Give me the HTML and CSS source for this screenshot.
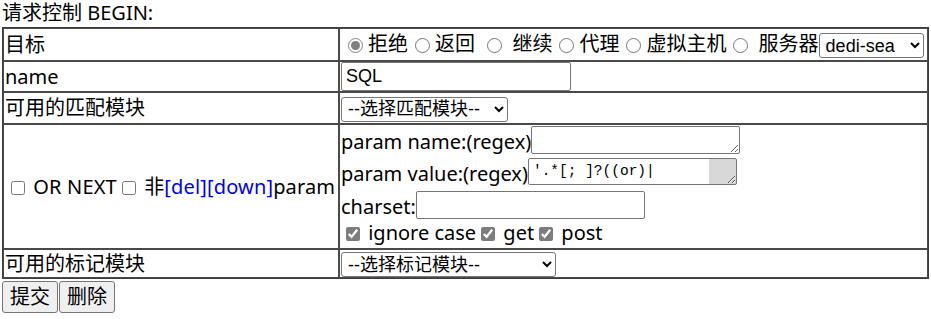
FILE: index.html
```html
<!DOCTYPE html>
<html lang="zh-CN">
<head>
<meta charset="utf-8">
<title>请求控制</title>
<link rel="stylesheet" href="styles.css">
</head>
<body>
<div class="title">请求控制 BEGIN:</div>
<form class="form">
<table class="grid">
  <tr class="row-target">
    <td class="label">目标</td>
    <td class="field"><input class="radio" type="radio" name="act" checked>拒绝<input class="radio" type="radio" name="act">返回 <input class="radio" type="radio" name="act"> 继续<input class="radio" type="radio" name="act">代理<input class="radio" type="radio" name="act">虚拟主机<input class="radio" type="radio" name="act"> 服务器<select class="sel sel-server"><option>dedi-sea</option></select></td>
  </tr>
  <tr class="row-name">
    <td class="label">name</td>
    <td class="field"><input class="text text-name" type="text" value="SQL"></td>
  </tr>
  <tr class="row-match">
    <td class="label">可用的匹配模块</td>
    <td class="field"><select class="sel sel-match"><option>--选择匹配模块--</option></select></td>
  </tr>
  <tr class="row-param">
    <td class="label label-param"><input class="check check-left" type="checkbox"> OR NEXT<input class="check" type="checkbox"> 非<a class="link" href="#">[del]</a><a class="link" href="#">[down]</a>param</td>
    <td class="field field-param">
      <div class="pline pline-name"><span>param name:(regex)</span><textarea class="area area-name"></textarea></div>
      <div class="pline pline-value"><span>param value:(regex)</span><textarea class="area area-value">'.*[; ]?((or)|</textarea></div>
      <div class="pline pline-charset"><span>charset:</span><input class="text text-charset" type="text"></div>
      <div class="pline pline-checks"><input class="check check-on" type="checkbox" checked> ignore case<input class="check check-on" type="checkbox" checked> get<input class="check check-on" type="checkbox" checked> post</div>
    </td>
  </tr>
  <tr class="row-mark">
    <td class="label">可用的标记模块</td>
    <td class="field"><select class="sel sel-mark"><option>--选择标记模块--</option></select></td>
  </tr>
</table>
<div class="buttons"><button class="btn" type="button">提交</button><button class="btn" type="button">删除</button></div>
</form>
</body>
</html>
```
FILE: styles.css
```css
html, body {
  margin: 0;
  padding: 0;
  background: #fff;
}
body {
  padding: 0 2px;
  font-family: "Noto Sans", "Noto Sans CJK SC", sans-serif;
  font-size: 20px;
  line-height: 26px;
  color: #000;
}
.title {
  height: 27px;
  line-height: 26px;
}
.form {
  margin: 0;
}
.grid {
  width: 927px;
  border-collapse: separate;
  border-spacing: 0;
  border: 1px solid #3c3c3c;
}
.grid td {
  box-sizing: border-box;
  border: 1px solid #4a4a4a;
  padding: 0 1px;
  white-space: nowrap;
}
.label {
  width: 336px;
}
.row-target td { height: 33px; }
.row-name td { height: 31px; }
.row-match td { height: 32px; }
.row-param td { height: 125px; }
.row-mark td { height: 28px; }

.radio {
  width: 15px;
  height: 15px;
  margin: 0 5px 0 7px;
  vertical-align: -2px;
  accent-color: #808080;
}
.check {
  width: 14px;
  height: 14px;
  margin: 0 3px 0 5px;
  vertical-align: -1px;
}
.check-on {
  accent-color: #7d7d7d;
}
.check-left {
  margin-left: 6px;
}
.sel {
  font-family: "Liberation Sans", "Noto Sans CJK SC", sans-serif;
  font-size: 18px;
  color: #000;
  background: #fff;
  border: 1px solid #767676;
  border-radius: 3px;
  padding: 0 2px;
  margin: 0;
  vertical-align: middle;
  box-sizing: border-box;
}
.sel-server {
  width: 105px;
  height: 25px;
}
.sel-match {
  width: 167px;
  height: 25px;
}
.sel-mark {
  width: 215px;
  height: 25px;
}
.text {
  box-sizing: border-box;
  font-family: "Liberation Sans", "Noto Sans CJK SC", sans-serif;
  font-size: 18px;
  border: 1px solid #767676;
  border-radius: 2px;
  padding: 1px 4px;
  margin: 0;
  vertical-align: middle;
}
.text-name {
  width: 230px;
  height: 29px;
}
.text-charset {
  width: 229px;
  height: 28px;
}
.label-param {
  text-align: left;
  letter-spacing: 0.15px;
}
.link {
  color: #0000ee;
  text-decoration: none;
}
.field-param {
  vertical-align: top;
  padding-top: 1px;
}
.pline {
  display: flex;
  align-items: flex-end;
}
.pline-name { height: 30px; }
.pline-value { height: 32px; }
.pline-charset { height: 33px; }
.pline-checks {
  display: block;
  height: 27px;
  line-height: 26px;
}
.pline span {
  line-height: 26px;
}
.area {
  box-sizing: border-box;
  display: block;
  margin: 0;
  border: 1px solid #767676;
  border-radius: 2px;
  font-family: "Liberation Mono", monospace;
  font-size: 14.5px;
  line-height: 20px;
  padding: 2px 4px;
  overflow: hidden;
  resize: both;
}
.area-name {
  width: 209px;
  height: 28px;
  margin-bottom: 1px;
}
.area-value {
  width: 209px;
  height: 27px;
  margin-bottom: 2px;
  padding-right: 30px;
  background: linear-gradient(to right, #fff calc(100% - 27px), #d8d8d8 0);
}
.text-charset {
  margin-bottom: 1px;
}
.buttons {
  display: flex;
  gap: 1px;
  padding-top: 2px;
}
.btn {
  font-family: "Noto Sans", "Noto Sans CJK SC", sans-serif;
  font-size: 20px;
  line-height: 24px;
  height: 32px;
  padding: 0 7px;
  color: #000;
  background: #efefef;
  border: 1px solid #767676;
  border-radius: 3px;
  margin: 0;
}
```
